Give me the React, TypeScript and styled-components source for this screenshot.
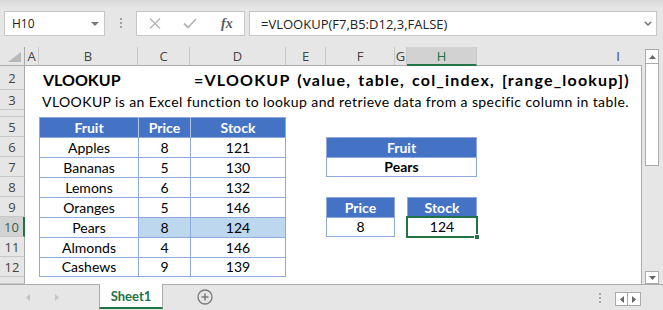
import React from 'react';
import styled, { createGlobalStyle, css } from 'styled-components';

const green = '#217346';
const rule = '#ababab';
const tableLine = '#8ea9db';
const headBlue = '#4472c4';

const GlobalStyle = createGlobalStyle`
  html, body { margin: 0; padding: 0; }
  body { background: #e6e6e6; font-family: Lato, "Liberation Sans", sans-serif; }
  * { box-sizing: border-box; }
`;

const Window = styled.div`
  width: 663px;
  height: 310px;
  display: flex;
  flex-direction: column;
  overflow: hidden;
  background: #e6e6e6;
`;

// formula bar
const TopBar = styled.div`
  height: 47px;
  flex: none;
  display: flex;
  align-items: flex-start;
  padding: 11px 6px 0 4px;
  background: linear-gradient(#d8d8d8, #e6e6e6 8px);
`;

const NameBox = styled.div`
  width: 101px;
  height: 25px;
  background: #fff;
  border: 1px solid #c6c6c6;
  display: flex;
  align-items: center;
  justify-content: space-between;
  padding: 0 5px 0 7px;
  font-family: "Open Sans", sans-serif;
  font-size: 12px;
  color: #222;
`;

const Grip = styled.div`
  width: 31px;
  height: 25px;
  display: flex;
  flex-direction: column;
  align-items: center;
  gap: 2px;
  padding-top: 7px;
  span { width: 2px; height: 2px; background: #a0a0a0; }
`;

const ButtonsBox = styled.div`
  width: 109px;
  height: 25px;
  background: #fff;
  border: 1px solid #c6c6c6;
  display: flex;
  align-items: center;
  padding-left: 12px;
  gap: 22px;
`;

const FxLabel = styled.span`
  font-family: "Liberation Serif", serif;
  font-style: italic;
  font-weight: bold;
  font-size: 14px;
  color: #5a5a5a;
  margin-left: 2px;
`;

const FormulaInput = styled.div`
  flex: 1;
  margin-left: 4px;
  height: 25px;
  background: #fff;
  border: 1px solid #c6c6c6;
  display: flex;
  align-items: center;
  justify-content: space-between;
  padding: 0 4px 0 11px;
  font-family: "Open Sans", sans-serif;
  font-size: 13px;
  color: #222;
`;

// sheet
const Main = styled.div`
  height: 237px;
  flex: none;
  display: flex;
`;

const Viewport = styled.div`
  width: 642px;
  height: 100%;
  overflow: hidden;
  position: relative;
  &::after {
    content: '';
    position: absolute;
    right: 0;
    top: 19px;
    bottom: 0;
    width: 1px;
    background: ${rule};
  }
`;

const Grid = styled.div`
  display: grid;
  grid-template-columns: 25px 14px 99px 52px 96px 40px 69px 12px 70px 283px;
  grid-template-rows: 19px 24px 20px 7px repeat(8, 20px) 7px;
  width: max-content;
  background: #fff;
`;

type PlaceProps = { $c: number; $r: number; $span?: number };

const place = css<PlaceProps>`
  grid-column: ${(p) => p.$c} / span ${(p) => p.$span ?? 1};
  grid-row: ${(p) => p.$r};
`;

const Corner = styled.div`
  grid-column: 1;
  grid-row: 1;
  background: #e6e6e6;
  border-right: 1px solid ${rule};
  border-bottom: 1px solid ${rule};
  display: flex;
  align-items: flex-end;
  justify-content: flex-end;
  padding: 0 3px 3px 0;
`;

const ColHead = styled.div<PlaceProps & { $active?: boolean }>`
  ${place};
  background: ${(p) => (p.$active ? '#d2d2d2' : '#e6e6e6')};
  border-right: 1px solid #c8c8c8;
  border-bottom: ${(p) => (p.$active ? `2px solid ${green}` : `1px solid ${rule}`)};
  display: flex;
  align-items: center;
  justify-content: center;
  font-family: "Open Sans", sans-serif;
  font-size: 13px;
  color: ${(p) => (p.$active ? green : '#444')};
  overflow: hidden;
`;

const RowHead = styled.div<PlaceProps & { $active?: boolean }>`
  ${place};
  background: ${(p) => (p.$active ? '#d2d2d2' : '#e6e6e6')};
  border-bottom: 1px solid #c8c8c8;
  border-right: ${(p) => (p.$active ? `2px solid ${green}` : `1px solid ${rule}`)};
  display: flex;
  align-items: center;
  justify-content: center;
  font-family: "Open Sans", sans-serif;
  font-size: 13px;
  color: ${(p) => (p.$active ? '#3a5e48' : '#444')};
  overflow: hidden;
`;

const Title = styled.div<PlaceProps & { $wide?: boolean }>`
  ${place};
  display: flex;
  align-items: flex-end;
  padding-left: 4px;
  font-size: 16px;
  font-weight: bold;
  line-height: 20px;
  letter-spacing: ${(p) => (p.$wide ? '1.2px' : '0')};
  word-spacing: ${(p) => (p.$wide ? '2px' : '0')};
  white-space: nowrap;
  color: #000;
`;

const Note = styled.div<PlaceProps>`
  ${place};
  display: flex;
  align-items: flex-end;
  padding-left: 3px;
  font-size: 14px;
  line-height: 16px;
  letter-spacing: 0.4px;
  white-space: nowrap;
  color: #000;
`;

const TCell = styled.div<PlaceProps & { $head?: boolean; $hl?: boolean; $bold?: boolean; $right?: boolean; $bottom?: boolean; $inner?: boolean }>`
  ${place};
  position: relative;
  display: flex;
  align-items: center;
  justify-content: center;
  font-size: 14px;
  line-height: 16px;
  white-space: nowrap;
  border-top: 1px solid ${tableLine};
  border-left: 1px solid ${(p) => (p.$head && p.$inner ? '#b4c6e7' : tableLine)};
  border-right: ${(p) => (p.$right ? `1px solid ${tableLine}` : 'none')};
  border-bottom: ${(p) => (p.$bottom ? `1px solid ${tableLine}` : 'none')};
  background: ${(p) => (p.$head ? headBlue : p.$hl ? '#bdd7ee' : '#fff')};
  color: ${(p) => (p.$head ? '#fff' : '#000')};
  font-weight: ${(p) => (p.$head || p.$bold ? 'bold' : 'normal')};
`;

const Selection = styled.div`
  position: absolute;
  left: -2px;
  top: -2px;
  right: -2px;
  bottom: -2px;
  border: 2px solid ${green};
  pointer-events: none;
`;

const FillHandle = styled.div`
  position: absolute;
  right: -4px;
  bottom: -4px;
  width: 6px;
  height: 6px;
  background: ${green};
  border: 1px solid #fff;
`;

// vertical scrollbar
const VScroll = styled.div`
  flex: 1;
  display: flex;
  flex-direction: column;
  padding: 2px 0 0 3px;
`;

const ScrollBtn = styled.div<{ $h: number }>`
  width: 14px;
  height: ${(p) => p.$h}px;
  flex: none;
  background: #fff;
  border: 1px solid ${rule};
  display: flex;
  align-items: center;
  justify-content: center;
`;

const Thumb = styled.div`
  width: 14px;
  height: 102px;
  flex: none;
  background: #fff;
  border: 1px solid ${rule};
  border-top: none;
`;

const Track = styled.div`
  flex: 1;
`;

// sheet tabs
const TabBar = styled.div`
  height: 26px;
  flex: none;
  border-top: 1px solid ${rule};
  display: flex;
  align-items: flex-start;
`;

const TabNav = styled.div`
  width: 99px;
  height: 25px;
  display: flex;
  align-items: center;
  padding-left: 26px;
  gap: 25px;
`;

const Tab = styled.div`
  width: 64px;
  height: 25px;
  margin-top: -1px;
  background: #fff;
  border-left: 1px solid ${rule};
  border-right: 1px solid ${rule};
  border-bottom: 2px solid ${green};
  display: flex;
  align-items: center;
  justify-content: center;
  padding-top: 1px;
  font-size: 13px;
  font-weight: bold;
  color: ${green};
`;

const AddSheet = styled.div`
  margin: 4px 0 0 34px;
  display: flex;
`;

const Spacer = styled.div`
  flex: 1;
`;

const Dots = styled.div`
  display: flex;
  flex-direction: column;
  gap: 2px;
  margin: 8px 14px 0 0;
  span { width: 2px; height: 2px; background: #a6a6a6; }
`;

const HScroll = styled.div`
  display: flex;
  margin: 7px 22px 0 0;
`;

const HBtn = styled.div`
  width: 13px;
  height: 14px;
  background: #fff;
  border: 1px solid ${rule};
  display: flex;
  align-items: center;
  justify-content: center;
  & + & { border-left: none; }
`;

const Tri = ({ dir, color, w = 7, h = 4 }: { dir: 'up' | 'down' | 'left' | 'right'; color: string; w?: number; h?: number }) => {
  const d = {
    down: `M0 0H${w}L${w / 2} ${h}Z`,
    up: `M0 ${h}H${w}L${w / 2} 0Z`,
    left: `M${w} 0V${h}L0 ${h / 2}Z`,
    right: `M0 0V${h}L${w} ${h / 2}Z`,
  }[dir];
  return (
    <svg width={w} height={h} viewBox={`0 0 ${w} ${h}`}>
      <path d={d} fill={color} />
    </svg>
  );
};

const columns = ['A', 'B', 'C', 'D', 'E', 'F', 'G', 'H', 'I'];
const rows = [2, 3, 4, 5, 6, 7, 8, 9, 10, 11, 12, 13];

const fruits: [string, number, number][] = [
  ['Apples', 8, 121],
  ['Bananas', 5, 130],
  ['Lemons', 6, 132],
  ['Oranges', 5, 146],
  ['Pears', 8, 124],
  ['Almonds', 4, 146],
  ['Cashews', 9, 139],
];

export default function App() {
  return (
    <Window>
      <GlobalStyle />
      <TopBar>
        <NameBox>
          <span>H10</span>
          <Tri dir="down" color="#7a7a7a" w={8} h={4} />
        </NameBox>
        <Grip>
          <span />
          <span />
          <span />
        </Grip>
        <ButtonsBox>
          <svg width="12" height="11" viewBox="0 0 12 11">
            <path d="M1 0.5L11 10.5M11 0.5L1 10.5" stroke="#b4b4b4" strokeWidth="1.4" />
          </svg>
          <svg width="14" height="11" viewBox="0 0 14 11">
            <path d="M1 5.5L5 9.5L13 1" stroke="#b4b4b4" strokeWidth="1.8" fill="none" />
          </svg>
          <FxLabel>fx</FxLabel>
        </ButtonsBox>
        <FormulaInput>
          <span>=VLOOKUP(F7,B5:D12,3,FALSE)</span>
          <svg width="8" height="5" viewBox="0 0 8 5">
            <path d="M0.8 0.8L4 4L7.2 0.8" stroke="#777" strokeWidth="1.5" fill="none" />
          </svg>
        </FormulaInput>
      </TopBar>

      <Main>
        <Viewport>
          <Grid>
            <Corner>
              <svg width="13" height="10" viewBox="0 0 13 10">
                <path d="M13 0V10H0Z" fill="#b8b8b8" />
              </svg>
            </Corner>
            {columns.map((c, i) => (
              <ColHead key={c} $c={i + 2} $r={1} $active={c === 'H'}>
                {c}
              </ColHead>
            ))}
            {rows.map((r) => (
              <RowHead key={r} $c={1} $r={r} $active={r === 10}>
                {r === 4 || r === 13 ? '' : r}
              </RowHead>
            ))}

            <Title $c={3} $r={2}>VLOOKUP</Title>
            <Title $c={5} $r={2} $wide>=VLOOKUP (value, table, col_index, [range_lookup])</Title>
            <Note $c={3} $r={3}>
              VLOOKUP is an Excel function to lookup and retrieve data from a specific column in table.
            </Note>

            <TCell $c={3} $r={5} $head>Fruit</TCell>
            <TCell $c={4} $r={5} $head $inner>Price</TCell>
            <TCell $c={5} $r={5} $head $inner $right>Stock</TCell>
            {fruits.map(([name, price, stock], i) => {
              const r = 6 + i;
              const last = i === fruits.length - 1;
              const hl = name === 'Pears';
              return (
                <React.Fragment key={name}>
                  <TCell $c={3} $r={r} $bottom={last}>{name}</TCell>
                  <TCell $c={4} $r={r} $bottom={last} $hl={hl}>{price}</TCell>
                  <TCell $c={5} $r={r} $bottom={last} $hl={hl} $right>{stock}</TCell>
                </React.Fragment>
              );
            })}

            <TCell $c={7} $r={6} $span={3} $head $right>Fruit</TCell>
            <TCell $c={7} $r={7} $span={3} $bold $right $bottom>Pears</TCell>

            <TCell $c={7} $r={9} $head $right>Price</TCell>
            <TCell $c={7} $r={10} $right $bottom>8</TCell>
            <TCell $c={9} $r={9} $head $right>Stock</TCell>
            <TCell $c={9} $r={10} $right $bottom>
              124
              <Selection>
                <FillHandle />
              </Selection>
            </TCell>
          </Grid>
        </Viewport>
        <VScroll>
          <ScrollBtn $h={15}>
            <Tri dir="up" color="#666" />
          </ScrollBtn>
          <Thumb />
          <Track />
          <ScrollBtn $h={13}>
            <Tri dir="down" color="#666" />
          </ScrollBtn>
        </VScroll>
      </Main>

      <TabBar>
        <TabNav>
          <Tri dir="left" color="#c4c4c4" w={4} h={7} />
          <Tri dir="right" color="#c4c4c4" w={4} h={7} />
        </TabNav>
        <Tab>Sheet1</Tab>
        <AddSheet>
          <svg width="16" height="16" viewBox="0 0 16 16">
            <circle cx="8" cy="8" r="7" stroke="#7a7a7a" strokeWidth="1.3" fill="none" />
            <path d="M8 4.5V11.5M4.5 8H11.5" stroke="#7a7a7a" strokeWidth="1.5" />
          </svg>
        </AddSheet>
        <Spacer />
        <Dots>
          <span />
          <span />
          <span />
        </Dots>
        <HScroll>
          <HBtn>
            <Tri dir="left" color="#666" w={4} h={7} />
          </HBtn>
          <HBtn>
            <Tri dir="right" color="#666" w={4} h={7} />
          </HBtn>
        </HScroll>
      </TabBar>
    </Window>
  );
}
